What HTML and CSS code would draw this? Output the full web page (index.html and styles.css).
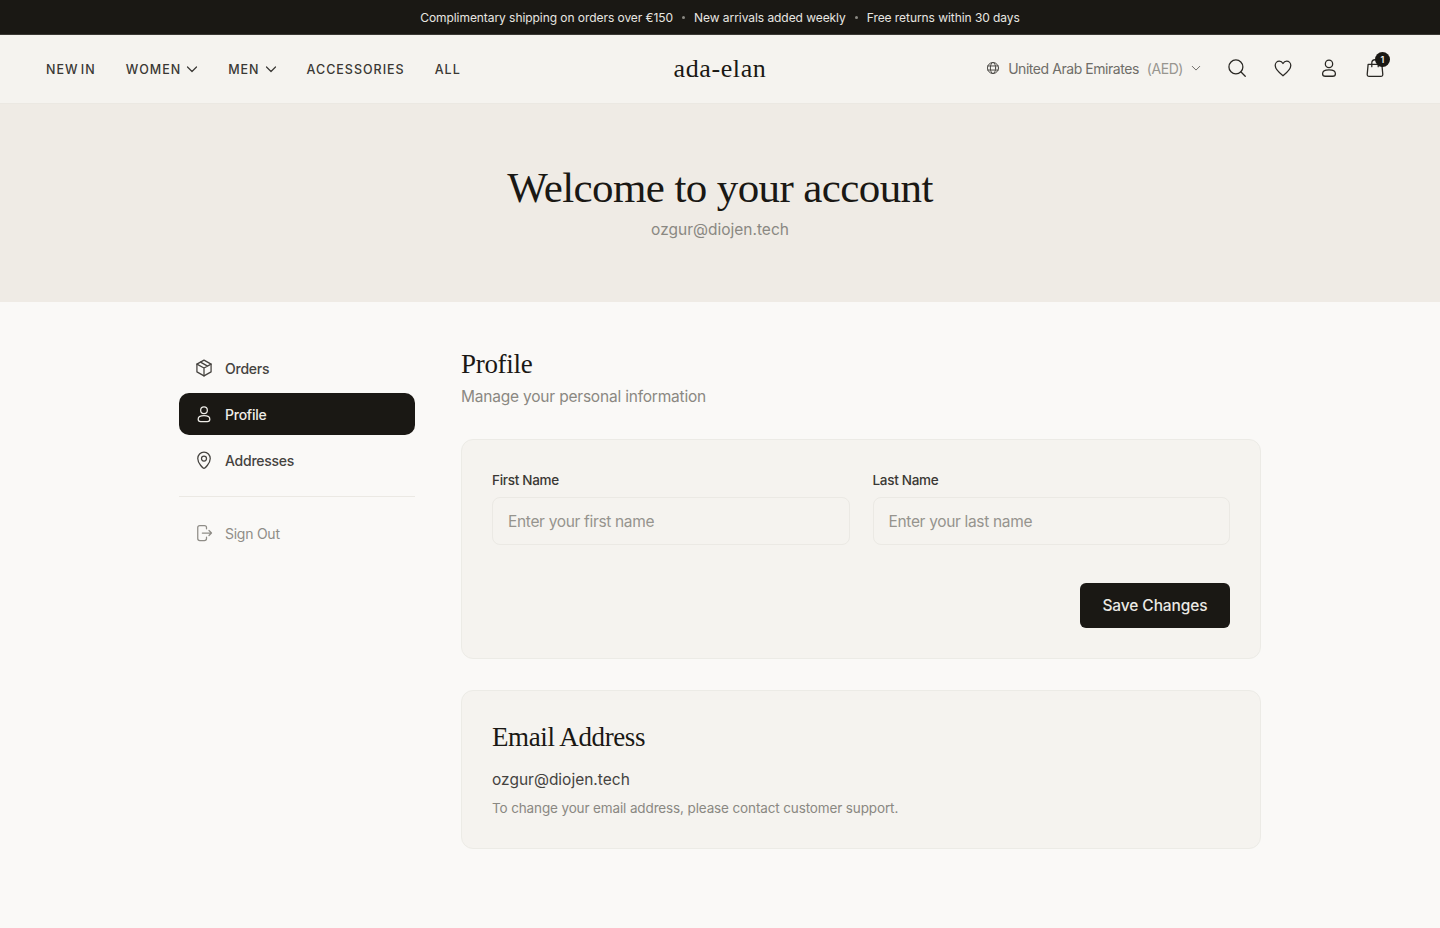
FILE: index.html
```html
<!DOCTYPE html>
<html lang="en">
<head>
    <meta charset="UTF-8">
    <title>ada-elan | Profile</title>
    <link rel="stylesheet" href="styles.css">
</head>
<body>
    <div class="promo-bar">
        <span>Complimentary shipping on orders over €150</span>
        <i class="promo-dot"></i>
        <span>New arrivals added weekly</span>
        <i class="promo-dot"></i>
        <span>Free returns within 30 days</span>
    </div>

    <header class="site-header">
        <nav class="main-nav">
            <a href="#">NEW IN</a>
            <a href="#">WOMEN <svg class="chev" viewBox="0 0 12 12"><path d="M1.5 4l4.500 4.500L10.500 4"/></svg></a>
            <a href="#">MEN <svg class="chev" viewBox="0 0 12 12"><path d="M1.500 4l4.500 4.500L10.500 4"/></svg></a>
            <a href="#">ACCESSORIES</a>
            <a href="#">ALL</a>
        </nav>
        <a href="#" class="logo">ada-elan</a>
        <div class="header-tools">
            <div class="region">
                <svg class="globe" viewBox="0 0 24 24"><circle cx="12" cy="12" r="9.500"/><ellipse cx="12" cy="12" rx="4.500" ry="9.500"/><path d="M3 8.500h18M3 15.500h18"/></svg>
                <span>United Arab Emirates</span>
                <span class="currency">(AED)</span>
                <svg class="chev chev-small" viewBox="0 0 12 12"><path d="M1.500 4l4.500 4.500L10.500 4"/></svg>
            </div>
            <div class="header-icons">
                <svg class="tool-icon" viewBox="0 0 24 24"><circle cx="10.800" cy="10.800" r="7.600"/><path d="M16.400 16.400L21 21"/></svg>
                <svg class="tool-icon" viewBox="0 0 24 24"><path d="M12 20.500C7 16.600 3.500 13.600 3.500 9.400 3.500 6.600 5.600 4.600 8 4.600c1.700 0 3.100.9 4 2.500.9-1.600 2.300-2.500 4-2.500 2.400 0 4.500 2 4.500 4.800 0 4.200-3.500 7.200-8.500 11.100z"/></svg>
                <svg class="tool-icon" viewBox="0 0 24 24"><circle cx="12" cy="7.500" r="4"/><path d="M12 14c-4.300 0-7 1.800-7 4.200 0 1.800 1.300 2.800 3 2.800h8c1.700 0 3-1 3-2.800 0-2.400-2.700-4.200-7-4.200z"/></svg>
                <div class="cart">
                    <svg class="tool-icon" viewBox="0 0 24 24"><path d="M4.500 8h15l1 11c.1 1.300-.8 2.200-2 2.200h-13c-1.200 0-2.100-.9-2-2.200l1-11z"/><path d="M8.500 10.500V6.500C8.500 4.500 10 3 12 3s3.500 1.500 3.500 3.500v4"/></svg>
                    <span class="cart-count">1</span>
                </div>
            </div>
        </div>
    </header>

    <section class="hero">
        <h1>Welcome to your account</h1>
        <p>ozgur@diojen.tech</p>
    </section>

    <main class="account">
        <aside class="sidebar">
            <a href="#" class="side-link">
                <svg class="side-icon" viewBox="0 0 24 24"><path d="M12 2.500l8.500 4.800v9.400L12 21.500l-8.500-4.800V7.300z"/><path d="M3.500 7.300L12 12l8.500-4.700M12 12v9.500M7.800 4.900l8.500 4.800"/></svg>
                Orders
            </a>
            <a href="#" class="side-link active">
                <svg class="side-icon" viewBox="0 0 24 24"><circle cx="12" cy="7.500" r="4"/><path d="M12 14c-4.300 0-7 1.800-7 4.200 0 1.800 1.300 2.800 3 2.800h8c1.700 0 3-1 3-2.800 0-2.400-2.700-4.200-7-4.200z"/></svg>
                Profile
            </a>
            <a href="#" class="side-link">
                <svg class="side-icon" viewBox="0 0 24 24"><path d="M12 22c-1 0-7.500-6-7.500-11.700C4.500 6 7.800 2.500 12 2.500s7.500 3.500 7.500 7.800C19.500 16 13 22 12 22z"/><circle cx="12" cy="10.300" r="3"/></svg>
                Addresses
            </a>
            <hr class="side-rule">
            <a href="#" class="side-link muted">
                <svg class="side-icon" viewBox="0 0 24 24"><path d="M15 7V5.500C15 3.800 14 3 12.500 3H7C5.300 3 4.500 4 4.500 5.500v13C4.500 20 5.300 21 7 21h5.500c1.500 0 2.500-.8 2.500-2.500V17"/><path d="M10 12h11M18 9l3 3-3 3"/></svg>
                Sign Out
            </a>
        </aside>

        <div class="content">
            <h2 class="page-title">Profile</h2>
            <p class="page-sub">Manage your personal information</p>

            <form class="card profile-card">
                <div class="field-row">
                    <label class="field">
                        <span>First Name</span>
                        <input type="text" placeholder="Enter your first name">
                    </label>
                    <label class="field">
                        <span>Last Name</span>
                        <input type="text" placeholder="Enter your last name">
                    </label>
                </div>
                <div class="form-actions">
                    <button type="button" class="save-btn">Save Changes</button>
                </div>
            </form>

            <section class="card email-card">
                <h3>Email Address</h3>
                <p class="email-value">ozgur@diojen.tech</p>
                <p class="email-note">To change your email address, please contact customer support.</p>
            </section>
        </div>
    </main>
</body>
</html>
```

FILE: styles.css
```css
* {
    box-sizing: border-box;
}
body {
    margin: 0;
    min-height: 928px;
    font-family: 'Inter', 'Noto Sans', sans-serif;
    color: #1a1814;
    background-color: #faf9f7;
}
a {
    color: inherit;
    text-decoration: none;
}
svg {
    fill: none;
    stroke: currentColor;
    stroke-linecap: round;
    stroke-linejoin: round;
}

/* promo bar */
.promo-bar {
    height: 35px;
    display: flex;
    justify-content: center;
    align-items: center;
    gap: 9px;
    background-color: #1a1814;
    border-bottom: 1px solid #3b3934;
    color: #e8e6e1;
    font-size: 12px;
    letter-spacing: -0.06px;
}
.promo-dot {
    width: 3px;
    height: 3px;
    margin: 1px 0 0;
    border-radius: 50%;
    background-color: #8b8983;
}

/* header */
.site-header {
    height: 69px;
    display: grid;
    grid-template-columns: 1fr auto 1fr;
    align-items: center;
    padding: 0 46px;
    background-color: #f5f3ef;
    border-bottom: 1px solid #ebe8e2;
}
.main-nav {
    display: flex;
    align-items: center;
    gap: 30px;
    font-size: 12.5px;
    font-weight: 500;
    letter-spacing: 1px;
    word-spacing: -2px;
    color: #3a3834;
}
.main-nav a {
    display: flex;
    align-items: center;
    gap: 5px;
}
.chev {
    width: 12px;
    height: 12px;
    stroke-width: 1.2;
}
.logo {
    font-family: 'Liberation Serif', serif;
    font-size: 26px;
    letter-spacing: 0.6px;
    color: #1a1814;
}
.header-tools {
    display: flex;
    justify-content: flex-end;
    align-items: center;
    gap: 25px;
    margin-right: 8px;
    padding-bottom: 2px;
}
.region {
    display: flex;
    align-items: center;
    font-size: 14px;
    letter-spacing: -0.45px;
    color: #6f6d68;
}
.globe {
    width: 14px;
    height: 14px;
    margin-right: 8px;
    stroke: #4c4a46;
    stroke-width: 1.7;
}
.currency {
    margin-left: 8px;
    color: #98968f;
}
.chev-small {
    width: 10px;
    height: 10px;
    margin-left: 8px;
}
.header-icons {
    display: flex;
    align-items: center;
    gap: 24px;
}
.tool-icon {
    display: block;
    width: 22px;
    height: 22px;
    stroke: #2a2824;
    stroke-width: 1.4;
}
.cart {
    position: relative;
}
.cart-count {
    position: absolute;
    top: -5px;
    right: -4px;
    width: 15px;
    height: 15px;
    border-radius: 50%;
    background-color: #1a1814;
    color: #f5f3ef;
    font-size: 9px;
    font-weight: 600;
    line-height: 15px;
    text-align: center;
}

/* hero */
.hero {
    height: 198px;
    padding-top: 56px;
    text-align: center;
    background-color: #efebe5;
}
.hero h1 {
    margin: 0;
    font-family: 'Liberation Serif', serif;
    font-size: 43px;
    font-weight: 400;
    line-height: 56px;
    letter-spacing: -0.6px;
    color: #1a1814;
}
.hero p {
    margin: 2px 0 0;
    font-size: 15.5px;
    line-height: 24px;
    color: #8a8882;
}

/* account layout */
.account {
    width: 1082px;
    margin: 0 auto;
    padding: 45px 0 78px;
    display: flex;
    gap: 46px;
}
.sidebar {
    width: 236px;
    flex-shrink: 0;
    display: flex;
    flex-direction: column;
    gap: 4px;
}
.side-link {
    height: 42px;
    display: flex;
    align-items: center;
    gap: 11px;
    padding: 0 15px;
    border-radius: 10px;
    font-size: 14px;
    font-weight: 500;
    letter-spacing: -0.25px;
    color: #45433f;
}
.side-link.active {
    background-color: #1a1814;
    color: #efede8;
}
.side-link.muted {
    color: #8f8d87;
    font-weight: 400;
}
.side-icon {
    width: 20px;
    height: 20px;
    stroke-width: 1.5;
}
.side-rule {
    width: 100%;
    margin: 11px 0;
    border: 0;
    border-top: 1px solid #ebe9e4;
}

.content {
    flex: 1;
}
.page-title {
    margin: 0;
    font-family: 'Liberation Serif', serif;
    font-size: 27px;
    font-weight: 400;
    line-height: 34px;
    letter-spacing: -0.3px;
    color: #1a1814;
}
.page-sub {
    margin: 4px 0 30px;
    font-size: 15.5px;
    line-height: 24px;
    letter-spacing: -0.2px;
    color: #8a8882;
}
.card {
    background-color: #f5f3ef;
    border: 1px solid #ecebe6;
    border-radius: 12px;
}
.profile-card {
    height: 220px;
    padding: 30px 30px 0;
    margin-bottom: 31px;
}
.field-row {
    display: grid;
    grid-template-columns: 1fr 1fr;
    gap: 23px;
}
.field span {
    display: block;
    margin-bottom: 7px;
    font-size: 13.5px;
    font-weight: 500;
    line-height: 20px;
    letter-spacing: -0.3px;
    color: #3a3834;
}
.field input {
    width: 100%;
    height: 48px;
    padding: 0 15px;
    font-family: inherit;
    font-size: 15.5px;
    letter-spacing: -0.33px;
    background-color: #f5f3ef;
    border: 1px solid #ebe9e4;
    border-radius: 8px;
    outline: none;
}
.field input::placeholder {
    color: #96948e;
    opacity: 1;
}
.form-actions {
    display: flex;
    justify-content: flex-end;
    margin-top: 38px;
}
.save-btn {
    width: 150px;
    height: 45px;
    font-family: inherit;
    font-size: 15.5px;
    font-weight: 500;
    letter-spacing: -0.1px;
    color: #ebe9e4;
    background-color: #1a1814;
    border: none;
    border-radius: 6px;
}
.email-card {
    height: 159px;
    padding: 29px 30px 0;
}
.email-card h3 {
    margin: 0;
    font-family: 'Liberation Serif', serif;
    font-size: 27px;
    font-weight: 400;
    line-height: 34px;
    letter-spacing: -0.4px;
    color: #1a1814;
}
.email-value {
    margin: 14px 0 0;
    font-size: 15.5px;
    line-height: 24px;
    color: #45433f;
}
.email-note {
    margin: 6px 0 0;
    font-size: 13.5px;
    line-height: 20px;
    letter-spacing: -0.13px;
    color: #8a8882;
}
```
